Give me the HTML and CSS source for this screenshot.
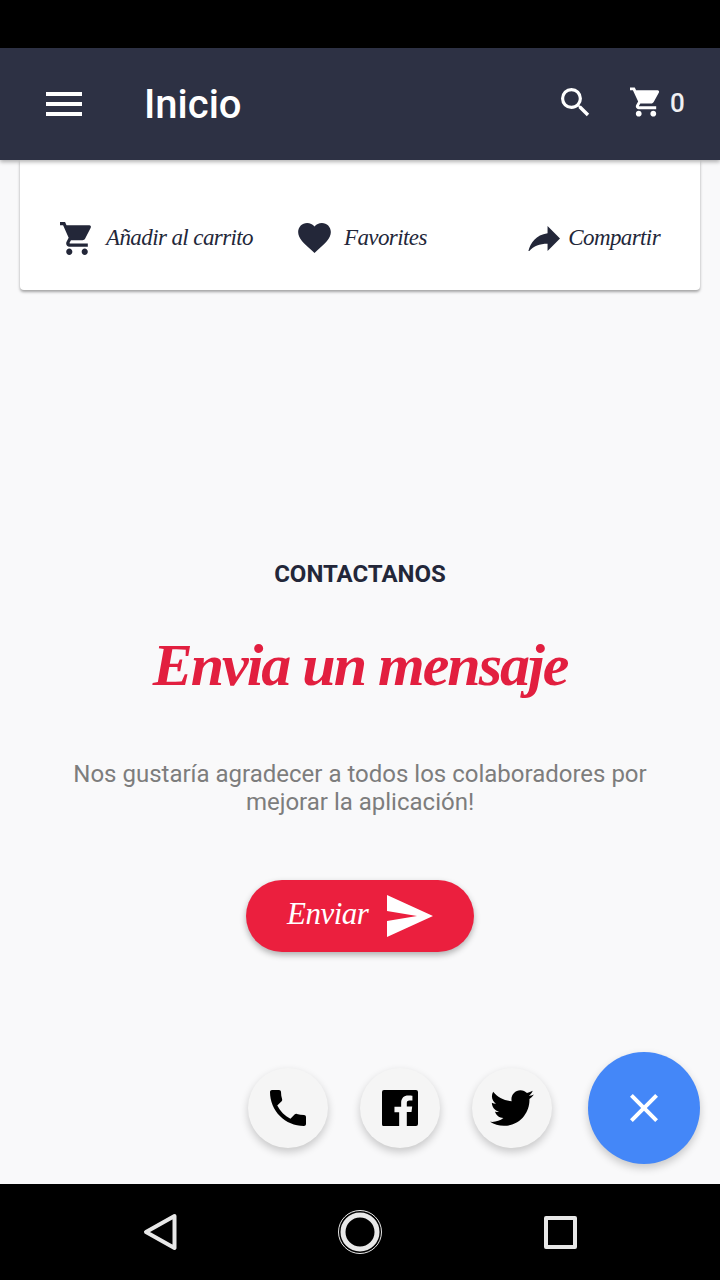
FILE: index.html
```html
<!DOCTYPE html>
<html lang="es">
<head>
	<meta charset="UTF-8">
	<title>Inicio</title>
	<link rel="stylesheet" href="styles.css">
</head>
<body>
	<div class="status"></div>
	<header class="appbar">
		<div class="burger"><i></i><i></i><i></i></div>
		<h1>Inicio</h1>
		<svg class="search" viewBox="3 3 18 18"><path d="M15.5 14h-.79l-.28-.27A6.47 6.47 0 0 0 16 9.5 6.5 6.5 0 1 0 9.5 16c1.61 0 3.09-.59 4.23-1.57l.27.28v.79l5 4.99L20.49 19l-4.99-5zm-6 0C7.01 14 5 11.99 5 9.5S7.01 5 9.5 5 14 7.01 14 9.5 11.99 14 9.5 14z"/></svg>
		<svg class="cart" viewBox="1 2 22 20"><path d="M7 18c-1.1 0-1.99.9-1.99 2S5.900 22 7 22s2-.9 2-2-.9-2-2-2zM1 2v2h2l3.600 7.590-1.350 2.450c-.16.28-.25.61-.25.960 0 1.100.9 2 2 2h12v-2H7.420c-.14 0-.25-.11-.25-.25l.03-.12.9-1.630h7.450c.75 0 1.410-.41 1.750-1.030l3.580-6.490A1 1 0 0 0 20 4H5.210l-.94-2H1zm16 16c-1.100 0-1.990.9-1.990 2s.89 2 1.990 2 2-.9 2-2-.9-2-2-2z"/></svg>
		<span class="count">0</span>
	</header>

	<main class="content">
		<section class="card">
			<div class="action act-cart">
				<svg viewBox="1 2 22 20" preserveAspectRatio="none"><path d="M7 18c-1.1 0-1.99.9-1.99 2S5.900 22 7 22s2-.9 2-2-.9-2-2-2zM1 2v2h2l3.600 7.590-1.350 2.450c-.16.28-.25.61-.25.960 0 1.100.9 2 2 2h12v-2H7.420c-.14 0-.25-.11-.25-.25l.03-.12.9-1.630h7.450c.75 0 1.410-.41 1.750-1.030l3.580-6.490A1 1 0 0 0 20 4H5.210l-.94-2H1z M17 18c-1.100 0-1.990.9-1.990 2s.89 2 1.990 2 2-.9 2-2-.9-2-2-2z"/></svg>
				<span>Añadir al carrito</span>
			</div>
			<div class="action act-fav">
				<svg viewBox="2 3 20 18.350"><path d="M12 21.350l-1.450-1.320C5.400 15.360 2 12.280 2 8.500 2 5.420 4.420 3 7.500 3c1.740 0 3.410.81 4.500 2.090C13.090 3.810 14.760 3 16.500 3 19.580 3 22 5.420 22 8.500c0 3.780-3.400 6.860-8.550 11.540L12 21.350z"/></svg>
				<span>Favorites</span>
			</div>
			<div class="action act-share">
				<svg viewBox="3 5 18 14"><path d="M14 9V5l7 7-7 7v-4.100c-5 0-8.500 1.600-11 5.100 1-5 4-10 11-11z"/></svg>
				<span>Compartir</span>
			</div>
		</section>

		<section class="contact">
			<h2>CONTACTANOS</h2>
			<h3>Envia un mensaje</h3>
			<p>Nos gustaría agradecer a todos los colaboradores por mejorar la aplicación!</p>
			<a class="send">
				<span>Enviar</span>
				<svg viewBox="0 0 46 42"><path d="M0 0 46 21 0 42V26L30 21 0 16z"/></svg>
			</a>
		</section>

		<div class="fabs">
			<div class="fab">
				<svg viewBox="3 3 18 18"><path d="M6.620 10.790c1.440 2.830 3.760 5.140 6.590 6.590l2.200-2.200c.27-.27.67-.36 1.020-.24 1.120.37 2.330.57 3.570.57.550 0 1 .45 1 1V20c0 .55-.45 1-1 1-9.390 0-17-7.610-17-17 0-.55.450-1 1-1h3.500c.55 0 1 .45 1 1 0 1.250.2 2.450.57 3.570.11.35.03.74-.25 1.020l-2.200 2.200z"/></svg>
			</div>
			<div class="fab">
				<svg viewBox="3 3 18 18"><path d="M4 3h16a1 1 0 0 1 1 1v16a1 1 0 0 1-1 1h-4.600v-7h2.350l.35-2.700h-2.700V9.600c0-.8.220-1.320 1.360-1.320h1.450V5.870c-.25-.03-1.110-.11-2.110-.11-2.090 0-3.520 1.280-3.520 3.620v2H9.230v2.700h2.350v7H4a1 1 0 0 1-1-1V4a1 1 0 0 1 1-1z"/></svg>
			</div>
			<div class="fab">
				<svg viewBox="1.500 4 21 17"><path d="M22.460 6c-.77.350-1.600.58-2.460.69.880-.53 1.560-1.370 1.880-2.380-.83.500-1.750.85-2.720 1.050C18.370 4.500 17.260 4 16 4c-2.350 0-4.270 1.920-4.270 4.290 0 .34.040.67.110.98-3.560-.18-6.730-1.890-8.840-4.480-.37.630-.58 1.370-.58 2.150 0 1.490.75 2.810 1.910 3.560-.71 0-1.370-.2-1.950-.5v.03c0 2.080 1.480 3.820 3.440 4.210-.36.100-.74.150-1.130.15-.27 0-.54-.03-.8-.08.54 1.690 2.110 2.950 4 2.980-1.460 1.160-3.310 1.840-5.330 1.840-.34 0-.68-.02-1.020-.06C3.440 20.290 5.700 21 8.120 21 16 21 20.330 14.460 20.330 8.790c0-.19 0-.37-.01-.56.840-.6 1.560-1.360 2.140-2.230z"/></svg>
			</div>
			<div class="fab fab-main">
				<svg viewBox="5 5 14 14"><path d="M19 6.410 17.590 5 12 10.590 6.410 5 5 6.410 10.590 12 5 17.590 6.410 19 12 13.410 17.590 19 19 17.590 13.410 12z"/></svg>
			</div>
		</div>
	</main>

	<footer class="navbar">
		<svg class="nav-back" viewBox="0 0 34 38"><path d="M31.500 3 3 19l28.500 16z"/></svg>
		<svg class="nav-home" viewBox="0 0 44 44"><circle cx="22" cy="22" r="21.500" class="thin"/><circle cx="22" cy="22" r="17"/></svg>
		<div class="nav-recent"></div>
	</footer>
</body>
</html>
```

FILE: styles.css
```css
* {
	box-sizing: border-box;
}
html, body {
	margin: 0;
	height: 1280px;
}
body {
	width: 720px;
	display: flex;
	flex-direction: column;
	background: #f9f9fa;
	font-family: Roboto, "Liberation Sans", sans-serif;
	overflow: hidden;
}
svg {
	display: block;
	fill: currentColor;
}
.status {
	height: 48px;
	background: #000;
}

.appbar {
	height: 112px;
	display: flex;
	align-items: center;
	padding-left: 46px;
	background: #2d3144;
	color: #fff;
	position: relative;
	z-index: 2;
	box-shadow: 0 2px 4px rgba(0, 0, 0, 0.3);
}
.burger {
	width: 36px;
	display: flex;
	flex-direction: column;
	gap: 6px;
	margin-right: 62px;
}
.burger i {
	display: block;
	height: 4px;
	background: #fff;
}
.appbar h1 {
	flex: 1;
	margin: 0;
	font-size: 40px;
	font-weight: 500;
}
.search {
	width: 29px;
	height: 29px;
	margin: -4px 40px 0 0;
}
.cart {
	width: 32px;
	height: 30px;
	margin: -4px 8px 0 0;
}
.count {
	width: 50px;
	margin-top: -2px;
	font-size: 26px;
	font-weight: 500;
	color: #f0f0f2;
}

.content {
	flex: 1;
	display: flex;
	flex-direction: column;
}
.card {
	height: 130px;
	margin: 0 20px;
	background: #fff;
	border-radius: 0 0 4px 4px;
	box-shadow: 0 2px 3px rgba(0, 0, 0, 0.35);
	display: flex;
	align-items: center;
	padding: 26px 40px 0 40px;
	color: #232739;
}
.action {
	display: flex;
	align-items: center;
	font-family: "Liberation Serif", serif;
	font-style: italic;
	font-size: 23px;
	letter-spacing: -0.6px;
}
.act-cart {
	gap: 12px;
	margin-right: 45px;
}
.act-cart svg {
	width: 34px;
	height: 33px;
}
.act-fav {
	gap: 13px;
	flex: 1;
}
.act-fav svg {
	width: 33px;
	height: 30px;
}
.act-share {
	gap: 8px;
}
.act-share svg {
	width: 32px;
	height: 25px;
}

.contact {
	display: flex;
	flex-direction: column;
	align-items: center;
	padding-top: 269px;
}
.contact h2 {
	margin: 0;
	font-size: 24px;
	line-height: 30px;
	font-weight: 700;
	color: #232739;
}
.contact h3 {
	margin: 37px 0 0;
	font-family: "Liberation Serif", serif;
	font-style: italic;
	font-weight: 700;
	font-size: 60px;
	letter-spacing: -2px;
	line-height: 78px;
	color: #e21f3f;
}
.contact p {
	margin: 56px 0 0;
	width: 600px;
	text-align: center;
	font-size: 24px;
	line-height: 28px;
	color: #7d7d7d;
}
.send {
	width: 228px;
	height: 72px;
	margin-top: 64px;
	border-radius: 36px;
	background: #eb1f3e;
	box-shadow: 0 3px 6px rgba(0, 0, 0, 0.3);
	color: #fff;
	display: flex;
	align-items: center;
	padding-left: 41px;
	gap: 19px;
	font-family: "Liberation Serif", serif;
	font-style: italic;
	font-size: 31px;
	letter-spacing: -0.5px;
}
.send span {
	margin-top: -4px;
}
.send svg {
	width: 46px;
	height: 42px;
}

.fabs {
	margin-top: auto;
	padding: 0 20px 20px 0;
	display: flex;
	justify-content: flex-end;
	align-items: center;
	gap: 32px;
}
.fab {
	width: 80px;
	height: 80px;
	border-radius: 50%;
	background: #f5f5f5;
	box-shadow: 0 4px 8px rgba(0, 0, 0, 0.2);
	display: flex;
	align-items: center;
	justify-content: center;
	color: #000;
}
.fab svg {
	width: 36px;
	height: 36px;
}
.fab:nth-child(3) svg {
	width: 44px;
	height: 36px;
}
.fab-main {
	width: 112px;
	height: 112px;
	margin-left: 4px;
	background: #4487f8;
	color: #fff;
	box-shadow: 0 4px 8px rgba(0, 0, 0, 0.2);
}
.fab-main svg {
	width: 28px;
	height: 28px;
}

.navbar {
	height: 96px;
	background: #000;
	display: flex;
	align-items: center;
	padding: 0 143px 0 143px;
	justify-content: space-between;
}
.nav-back {
	width: 34px;
	height: 38px;
	margin-right: -1px;
	fill: none;
	stroke: #e8e8e8;
	stroke-width: 4;
	stroke-linejoin: round;
}
.nav-home {
	width: 44px;
	height: 44px;
	fill: none;
	stroke: #e8e8e8;
	stroke-width: 5;
}
.nav-home .thin {
	stroke-width: 1;
}
.nav-recent {
	width: 33px;
	height: 33px;
	border: 4px solid #e8e8e8;
	border-radius: 2px;
}
```
